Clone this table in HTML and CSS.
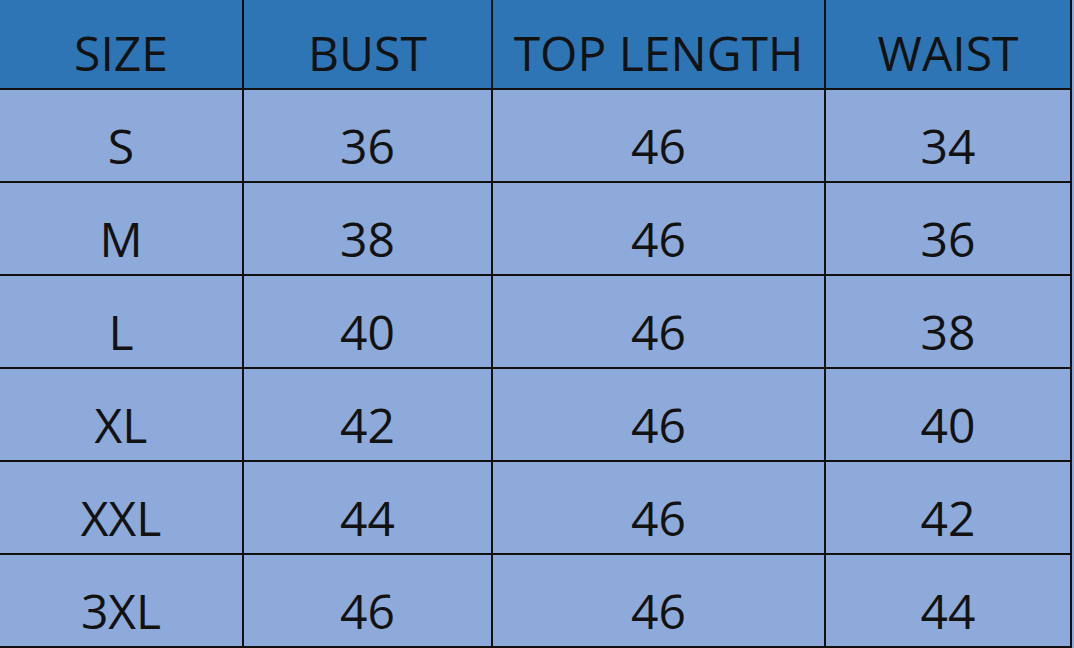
FILE: index.html
```html
<!DOCTYPE html>
<html lang="en">
<head>
<meta charset="utf-8">
<title>Size Chart</title>
<link rel="stylesheet" href="styles.css">
</head>
<body>
<div class="chart">
  <div class="cell head">SIZE</div>
  <div class="cell head">BUST</div>
  <div class="cell head">TOP LENGTH</div>
  <div class="cell head">WAIST</div>

  <div class="cell">S</div><div class="cell">36</div><div class="cell">46</div><div class="cell">34</div>
  <div class="cell">M</div><div class="cell">38</div><div class="cell">46</div><div class="cell">36</div>
  <div class="cell">L</div><div class="cell">40</div><div class="cell">46</div><div class="cell">38</div>
  <div class="cell">XL</div><div class="cell">42</div><div class="cell">46</div><div class="cell">40</div>
  <div class="cell">XXL</div><div class="cell">44</div><div class="cell">46</div><div class="cell">42</div>
  <div class="cell">3XL</div><div class="cell">46</div><div class="cell">46</div><div class="cell">44</div>
</div>
</body>
</html>
```

FILE: styles.css
```css
html, body {
  margin: 0;
  padding: 0;
  background: #8eaadb;
}
body {
  width: 1074px;
  height: 648px;
  overflow: hidden;
}
.chart {
  display: grid;
  grid-template-columns: 242px 247px 331px 244px;
  grid-template-rows: 88px repeat(6, 91px);
  gap: 2px;
  padding: 0 2px 2px 0;
  background: #111111;
  width: max-content;
}
.cell {
  background: #8eaadb;
  color: #121212;
  font-family: "Open Sans", "Liberation Sans", sans-serif;
  font-size: 48px;
  font-weight: 500;
  line-height: 1;
  display: flex;
  align-items: flex-end;
  justify-content: center;
  padding-bottom: 11px;
  box-sizing: border-box;
}
.head {
  background: #2e75b6;
}
```
